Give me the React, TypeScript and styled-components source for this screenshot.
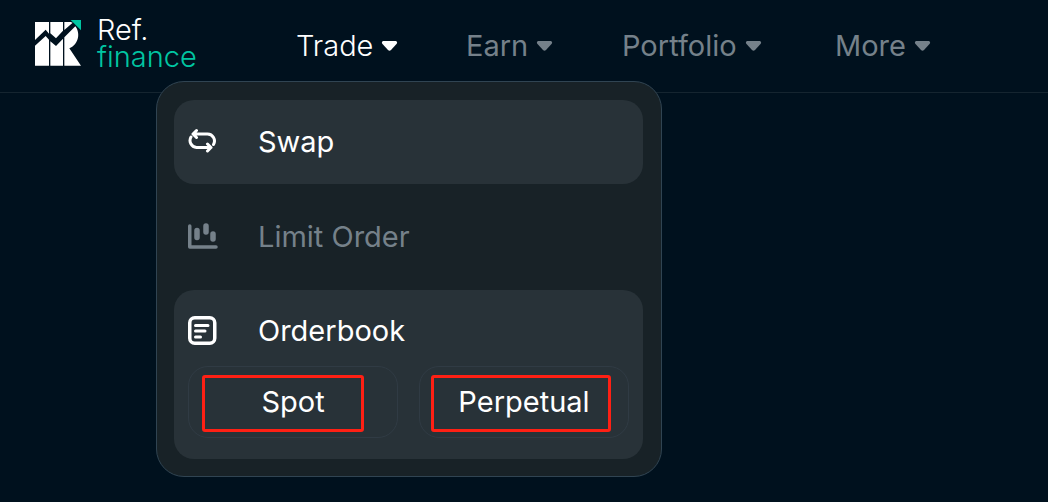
import React from "react";
import styled, { createGlobalStyle } from "styled-components";

const Global = createGlobalStyle`
  * { box-sizing: border-box; }
  body {
    margin: 0;
    background: #00111e;
    color: #fff;
    font-family: Inter, "Liberation Sans", sans-serif;
    font-size: 29px;
    line-height: 36px;
  }
  button { font: inherit; color: inherit; background: none; border: 0; padding: 0; cursor: pointer; }
`;

const Page = styled.main`
  min-height: 100vh;
`;

const Header = styled.header`
  display: flex;
  align-items: center;
  height: 93px;
  padding-left: 34px;
  border-bottom: 1px solid #152530;
`;

const Brand = styled.a`
  display: flex;
  align-items: center;
  gap: 15px;
  width: 262px;
  flex: none;
  color: #fff;
  text-decoration: none;
  line-height: 27px;
  padding-bottom: 6px;
`;

const BrandName = styled.span<{ $accent?: boolean }>`
  display: block;
  font-weight: 300;
  color: ${(p) => (p.$accent ? "#00c6a2" : "#fff")};
`;

const Nav = styled.nav`
  display: grid;
  grid-template-columns: 170px 156px 213px auto;
`;

const NavItem = styled.div`
  position: relative;
`;

const NavButton = styled.button<{ $active?: boolean }>`
  display: flex;
  align-items: center;
  gap: 8px;
  font-weight: ${(p) => (p.$active ? 300 : 400)};
  color: ${(p) => (p.$active ? "#fff" : "#75818a")};
`;

const Menu = styled.div`
  position: absolute;
  top: 53px;
  left: -140px;
  display: flex;
  flex-direction: column;
  gap: 11px;
  width: 506px;
  padding: 18px 18px 17px 17px;
  border: 1px solid #304452;
  border-radius: 28px;
  background: #182227;
`;

const MenuGroup = styled.div<{ $filled?: boolean }>`
  border-radius: 20px;
  background: ${(p) => (p.$filled ? "#283238" : "transparent")};
`;

const MenuButton = styled.button<{ $muted?: boolean; $compact?: boolean }>`
  display: flex;
  align-items: center;
  gap: 39px;
  width: 100%;
  height: ${(p) => (p.$compact ? "76px" : "84px")};
  padding: ${(p) => (p.$compact ? "6px 14px 0" : "0 14px")};
  color: ${(p) => (p.$muted ? "#75818a" : "#fff")};
`;

const SubRow = styled.div`
  display: grid;
  grid-template-columns: 1fr 1fr;
  gap: 21px;
  padding: 0 14px 21px;
`;

const SubButton = styled.button`
  position: relative;
  height: 72px;
  border: 1px solid #303b44;
  border-radius: 20px;
`;

const Highlight = styled.span<{ $left: number; $right: number }>`
  position: absolute;
  top: 8px;
  bottom: 5px;
  left: ${(p) => p.$left}px;
  right: ${(p) => p.$right}px;
  border: 3px solid #ff2014;
  border-radius: 3px;
`;

const Logo = () => (
  <svg width="48" height="48" viewBox="42 42 144 144" aria-hidden="true">
    <path fill="#fff" d="M45 51H87V86L77 74L45 105ZM91 51H129V77L108 100L91 85ZM133 51H152L158 53L133 75ZM45 122L77 93L87 104V182H45ZM91 109L108 123L129 101V182H91ZM133 97L166 64C181 82 178 118 148 130L183 182H133Z" />
    <path fill="#00c6a2" d="M152 45H183V76Z" />
  </svg>
);

const Caret = () => (
  <svg width="17" height="10" viewBox="0 0 17 10" fill="currentColor" aria-hidden="true">
    <path d="M2 0H15Q17 1 15.500 3L10 9Q8.500 10.500 7 9L1.500 3Q0 1 2 0Z" />
  </svg>
);

const SwapIcon = () => (
  <svg width="31" height="30" viewBox="0 0 31 30" fill="none" stroke="currentColor" strokeWidth="3" strokeLinecap="round" strokeLinejoin="round" aria-hidden="true">
    <path d="M8.500 3.500L5 7L8.500 10.500M5 7H19.500A7 7 0 0 1 25.500 17.500M19.500 17L23 20.500L19.500 24M23 20.500H8.500A7 7 0 0 1 3 10" />
  </svg>
);

const ChartIcon = () => (
  <svg width="31" height="30" viewBox="0 0 31 30" fill="none" stroke="currentColor" strokeLinecap="round" strokeLinejoin="round" aria-hidden="true">
    <path strokeWidth="3.500" d="M1.750 4V25H28" />
    <path strokeWidth="5.500" d="M9 8.500V15.500M18 4V10M25 12V17" />
  </svg>
);

const BookIcon = () => (
  <svg width="31" height="30" viewBox="0 0 31 30" fill="none" stroke="currentColor" strokeWidth="3.500" strokeLinecap="round" aria-hidden="true">
    <rect x="1.750" y="1.750" width="25" height="25.500" rx="5" />
    <path d="M7.500 9.500H20M7.500 15H17M7.500 21H12.500" strokeWidth="3" />
  </svg>
);

const NAV = ["Earn", "Portfolio", "More"];

export default function App() {
  return (
    <Page>
      <Global />
      <Header>
        <Brand href="#">
          <Logo />
          <span>
            <BrandName>Ref.</BrandName>
            <BrandName $accent>finance</BrandName>
          </span>
        </Brand>
        <Nav>
          <NavItem>
            <NavButton $active aria-expanded="true">
              Trade
              <Caret />
            </NavButton>
            <Menu>
              <MenuGroup $filled>
                <MenuButton>
                  <SwapIcon />
                  Swap
                </MenuButton>
              </MenuGroup>
              <MenuGroup>
                <MenuButton $muted>
                  <ChartIcon />
                  Limit Order
                </MenuButton>
              </MenuGroup>
              <MenuGroup $filled>
                <MenuButton $compact>
                  <BookIcon />
                  Orderbook
                </MenuButton>
                <SubRow>
                  <SubButton>
                    Spot
                    <Highlight $left={13} $right={33} />
                  </SubButton>
                  <SubButton>
                    Perpetual
                    <Highlight $left={11} $right={17} />
                  </SubButton>
                </SubRow>
              </MenuGroup>
            </Menu>
          </NavItem>
          {NAV.map((label) => (
            <NavItem key={label}>
              <NavButton>
                {label}
                <Caret />
              </NavButton>
            </NavItem>
          ))}
        </Nav>
      </Header>
    </Page>
  );
}
